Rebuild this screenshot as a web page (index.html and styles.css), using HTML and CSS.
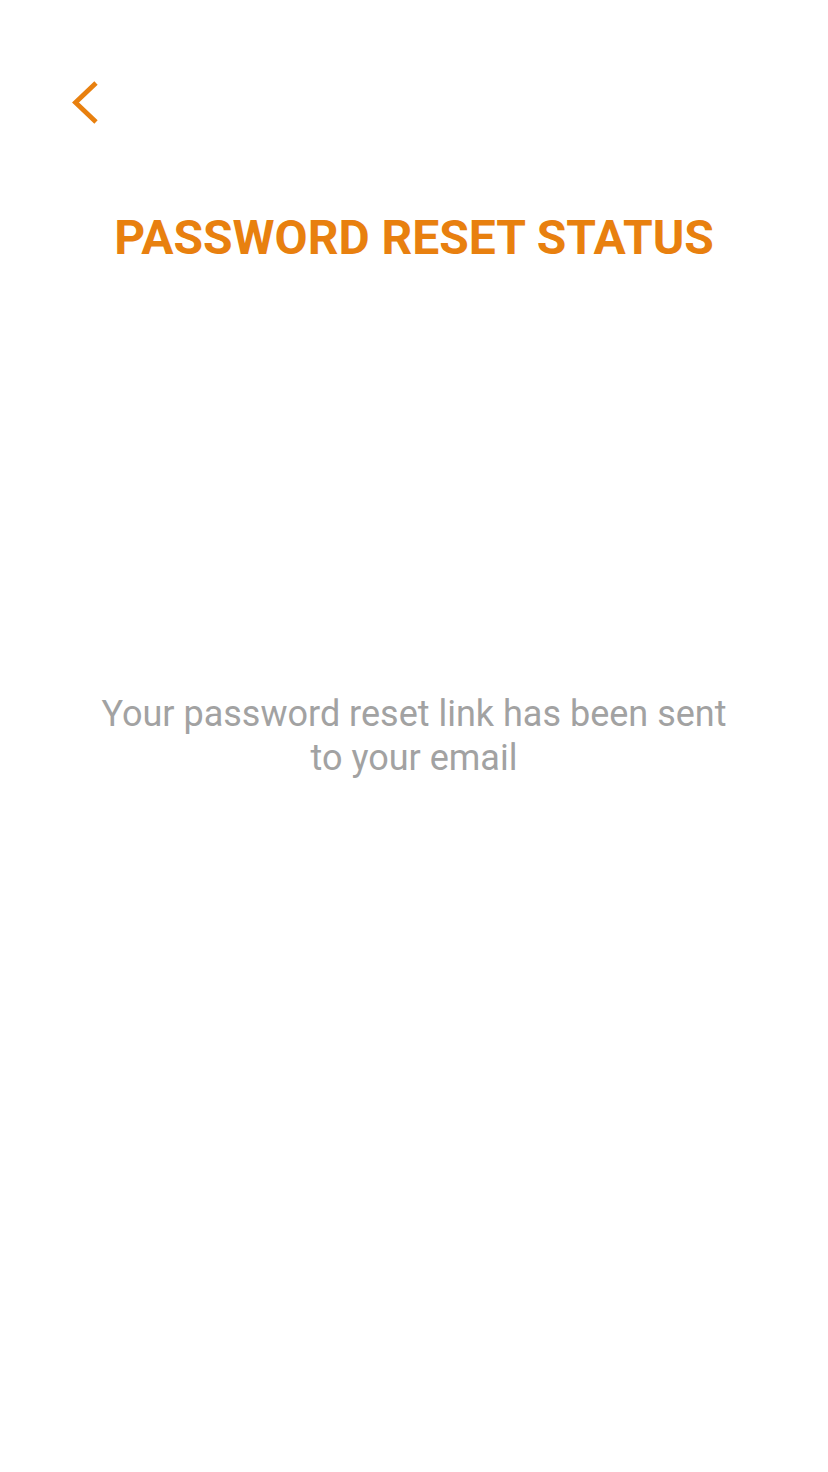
FILE: index.html
```html
<!DOCTYPE html>
<html lang="en">
<head>
<meta charset="utf-8">
<title>Password Reset Status</title>
<link rel="stylesheet" href="styles.css">
</head>
<body>
<main class="screen">
  <header class="top">
    <button class="back" aria-label="Back">
      <svg width="40" height="50" viewBox="0 0 40 50"><polyline points="26,6 5.5,25.5 26,45" fill="none" stroke="#E8800F" stroke-width="4.8" stroke-linecap="butt" stroke-linejoin="miter"/></svg>
    </button>
    <h1 class="title">PASSWORD RESET STATUS</h1>
  </header>
  <p class="message">Your password reset link has been sent to your email</p>
</main>
</body>
</html>
```
FILE: styles.css
```css
html, body {
  margin: 0;
  padding: 0;
  background: #ffffff;
}
.screen {
  display: grid;
  height: 1472px;
  width: 828px;
  font-family: Roboto, "Noto Sans", sans-serif;
}
.top, .message {
  grid-area: 1 / 1;
}
.top {
  align-self: start;
  display: flex;
  flex-direction: column;
  padding-top: 77px;
}
.back {
  background: none;
  border: 0;
  padding: 0;
  margin-left: 70px;
  width: 40px;
  height: 50px;
  cursor: pointer;
}
.back svg { display: block; }
.title {
  margin: 81px 0 0;
  text-align: center;
  color: #E8800F;
  font-weight: 700;
  font-size: 48px;
  line-height: 60px;
  letter-spacing: 0;
}
.message {
  align-self: center;
  justify-self: center;
  width: 650px;
  margin: 0;
  text-align: center;
  color: #A2A2A2;
  font-size: 36px;
  line-height: 44px;
}
```
